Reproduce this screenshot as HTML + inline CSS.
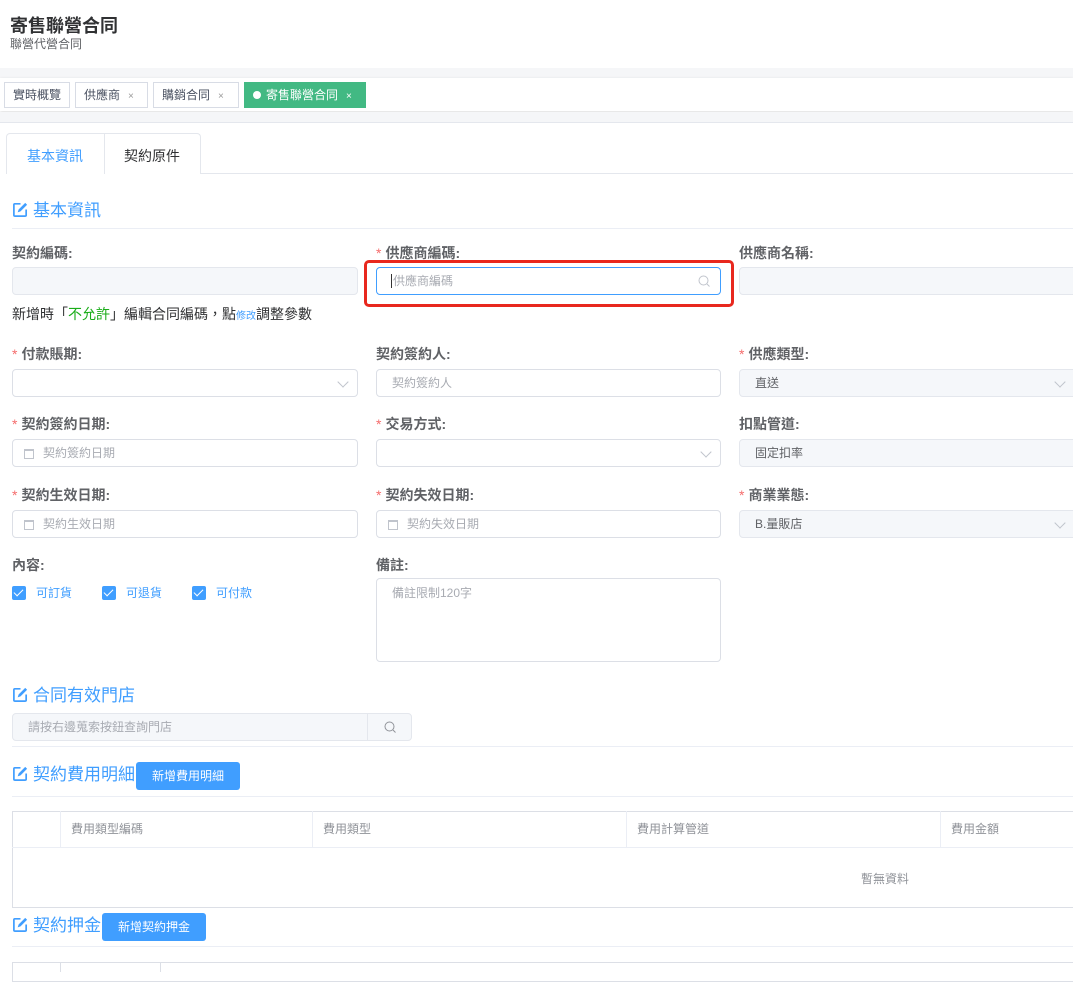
<!DOCTYPE html>
<html><head><meta charset="utf-8"><style>
*{box-sizing:border-box;margin:0;padding:0}
body{width:1073px;height:968px;overflow:hidden;background:#fff;font-family:"Liberation Sans","Noto Sans CJK TC",sans-serif;color:#606266;position:relative}
.a{position:absolute}
.lbl{position:absolute;font-size:14px;font-weight:bold;color:#606266;line-height:16px}
.lbl i{color:#f56c6c;font-style:normal;font-weight:normal;margin-right:4px}
.inp{position:absolute;height:28px;border:1px solid #dcdfe6;border-radius:4px;background:#fff;font-size:12px;color:#a8abb2;line-height:26px;padding-left:15px}
.dis{background:#f5f7fa;border-color:#e4e7ed;color:#606266}
.arrow{position:absolute;right:10px;top:8px;width:8px;height:8px;border-right:1px solid #c0c4cc;border-bottom:1px solid #c0c4cc;transform:rotate(45deg)}
.cal{position:absolute;left:11px;top:9px;width:10px;height:10px;border:1px solid #c0c4cc;border-top-width:2px}
.sec{position:absolute;left:12px;font-size:17px;color:#409eff;line-height:20px;white-space:nowrap}
.sec svg{vertical-align:-2px;margin-right:4px}
.hr{position:absolute;left:12px;right:0;height:1px;background:#ebeef5}
.btn{position:absolute;height:28px;background:#409eff;color:#fff;font-size:12px;border-radius:3px;text-align:center;line-height:28px}
.cb{position:absolute;top:586px;font-size:12px;color:#409eff;line-height:14px}
.cb b{display:inline-block;width:14px;height:14px;background:#409eff;border-radius:2px;vertical-align:-3px;margin-right:10px;position:relative}
.cb b:after{content:"";position:absolute;left:4px;top:1px;width:4px;height:8px;border-right:1px solid #fff;border-bottom:1px solid #fff;transform:rotate(45deg)}
.tag{position:absolute;top:82px;height:26px;border:1px solid #d8dce5;font-size:12px;color:#495060;line-height:24px;padding-left:8px;background:#fff}
.tag span{color:#999;font-size:10px;margin-left:8px}
.th{position:absolute;top:811px;height:37px;border-left:1px solid #ebeef5;font-size:12px;color:#909399;line-height:37px;padding-left:10px}
</style></head><body>
<div class="a" style="left:10px;top:12px;font-size:18px;font-weight:bold;color:#303133">寄售聯營合同</div>
<div class="a" style="left:10px;top:35px;font-size:12px;color:#606266">聯營代營合同</div>
<div class="a" style="left:0;top:68px;width:1073px;height:10px;background:#f5f6f8"></div>
<div class="a" style="left:0;top:78px;width:1073px;height:33px;background:#fff;box-shadow:0 1px 3px rgba(0,0,0,.15)"></div>
<div class="tag" style="left:4px;width:66px">實時概覽</div>
<div class="tag" style="left:75px;width:73px">供應商<span>×</span></div>
<div class="tag" style="left:153px;width:86px">購銷合同<span>×</span></div>
<div class="tag" style="left:244px;width:122px;background:#42b983;border-color:#42b983;color:#fff"><b style="display:inline-block;width:8px;height:8px;border-radius:50%;background:#fff;margin-right:5px;vertical-align:0"></b>寄售聯營合同<span style="color:#fff">×</span></div>
<div class="a" style="left:0;top:112px;width:1073px;height:10px;background:#f5f6f8"></div>
<div class="a" style="left:0;top:122px;width:1073px;height:1px;background:#e4e7ed"></div>
<div class="a" style="left:6px;top:173px;right:0;height:1px;background:#e4e7ed"></div>
<div class="a" style="left:6px;top:133px;width:195px;height:41px;border:1px solid #e4e7ed;border-bottom:none;border-radius:4px 4px 0 0;background:#fff"></div>
<div class="a" style="left:104px;top:133px;width:1px;height:41px;background:#e4e7ed"></div>
<div class="a" style="left:27px;top:146px;font-size:14px;color:#409eff">基本資訊</div>
<div class="a" style="left:124px;top:146px;font-size:14px;color:#303133">契約原件</div>

<svg width="0" height="0" style="position:absolute"><defs><symbol id="ed" viewBox="0 0 18 18"><path d="M9 3H3a1 1 0 0 0-1 1v11a1 1 0 0 0 1 1h11a1 1 0 0 0 1-1V9" fill="none" stroke="#409eff" stroke-width="1.8"/><path d="M14 2l2 2-7 7-3 1 1-3z" fill="#409eff"/></symbol></defs></svg>

<div class="sec" style="top:201px"><svg width="17" height="17"><use href="#ed"/></svg>基本資訊</div>
<div class="hr" style="top:228px"></div>

<div class="lbl" style="left:12px;top:245px">契約編碼:</div>
<div class="inp dis" style="left:12px;top:267px;width:346px"></div>
<div class="lbl" style="left:376px;top:245px"><i>*</i>供應商編碼:</div>
<div class="inp" style="left:376px;top:267px;width:345px;border-color:#409eff;color:#a8abb2"><span style="border-left:1px solid #333;padding-left:1px;margin-left:-1px">供應商編碼</span><svg class="a" style="right:10px;top:7px" width="12" height="12"><circle cx="5.5" cy="5.5" r="4.5" fill="none" stroke="#c0c4cc"/><path d="M9 9l2.5 2.5" stroke="#c0c4cc"/></svg></div>
<div class="a" style="left:364px;top:260px;width:370px;height:47px;border:3px solid #e8281e;border-radius:5px"></div>
<div class="lbl" style="left:739px;top:245px">供應商名稱:</div>
<div class="inp dis" style="left:739px;top:267px;width:340px"></div>
<div class="a" style="left:12px;top:304px;font-size:14px;color:#303133">新增時「<span style="color:#1aad19">不允許</span>」編輯合同編碼，點<span style="font-size:10px;color:#409eff">修改</span>調整參數</div>

<div class="lbl" style="left:12px;top:346px"><i>*</i>付款賬期:</div>
<div class="inp" style="left:12px;top:369px;width:346px"><div class="arrow"></div></div>
<div class="lbl" style="left:376px;top:346px">契約簽約人:</div>
<div class="inp" style="left:376px;top:369px;width:345px">契約簽約人</div>
<div class="lbl" style="left:739px;top:346px"><i>*</i>供應類型:</div>
<div class="inp dis" style="left:739px;top:369px;width:340px">直送<div class="arrow" style="right:14px"></div></div>

<div class="lbl" style="left:12px;top:416px"><i>*</i>契約簽約日期:</div>
<div class="inp" style="left:12px;top:439px;width:346px;padding-left:30px"><div class="cal"></div>契約簽約日期</div>
<div class="lbl" style="left:376px;top:416px"><i>*</i>交易方式:</div>
<div class="inp" style="left:376px;top:439px;width:345px"><div class="arrow"></div></div>
<div class="lbl" style="left:739px;top:416px">扣點管道:</div>
<div class="inp dis" style="left:739px;top:439px;width:340px">固定扣率</div>

<div class="lbl" style="left:12px;top:487px"><i>*</i>契約生效日期:</div>
<div class="inp" style="left:12px;top:510px;width:346px;padding-left:30px"><div class="cal"></div>契約生效日期</div>
<div class="lbl" style="left:376px;top:487px"><i>*</i>契約失效日期:</div>
<div class="inp" style="left:376px;top:510px;width:345px;padding-left:30px"><div class="cal"></div>契約失效日期</div>
<div class="lbl" style="left:739px;top:487px"><i>*</i>商業業態:</div>
<div class="inp dis" style="left:739px;top:510px;width:340px">B.量販店<div class="arrow" style="right:14px"></div></div>

<div class="lbl" style="left:12px;top:557px">內容:</div>
<div class="cb" style="left:12px"><b></b>可訂貨</div>
<div class="cb" style="left:102px"><b></b>可退貨</div>
<div class="cb" style="left:192px"><b></b>可付款</div>
<div class="lbl" style="left:376px;top:557px">備註:</div>
<div class="inp" style="left:376px;top:578px;width:345px;height:84px;line-height:28px;padding-top:0">備註限制120字</div>

<div class="sec" style="top:686px"><svg width="17" height="17"><use href="#ed"/></svg>合同有效門店</div>
<div class="inp dis" style="left:12px;top:713px;width:400px;color:#a8abb2">請按右邊蒐索按鈕查詢門店<div class="a" style="left:354px;top:0;width:1px;height:26px;background:#e4e7ed"></div><svg class="a" style="left:371px;top:7px" width="12" height="12"><circle cx="5.5" cy="5.5" r="4.5" fill="none" stroke="#909399"/><path d="M9 9l2.5 2.5" stroke="#909399"/></svg></div>
<div class="hr" style="top:746px"></div>

<div class="sec" style="top:765px"><svg width="17" height="17"><use href="#ed"/></svg>契約費用明細</div>
<div class="btn" style="left:136px;top:762px;width:104px">新增費用明細</div>
<div class="hr" style="top:796px"></div>
<div class="a" style="left:12px;top:811px;width:1070px;height:97px;border:1px solid #dcdfe6"></div>
<div class="a" style="left:12px;top:847px;width:1070px;height:1px;background:#ebeef5"></div>
<div class="th" style="left:60px;width:252px">費用類型編碼</div>
<div class="th" style="left:312px;width:314px">費用類型</div>
<div class="th" style="left:626px;width:314px">費用計算管道</div>
<div class="th" style="left:940px;width:140px">費用金額</div>
<div class="a" style="left:861px;top:870px;font-size:12px;color:#909399">暫無資料</div>

<div class="sec" style="top:916px"><svg width="17" height="17"><use href="#ed"/></svg>契約押金</div>
<div class="btn" style="left:102px;top:913px;width:104px">新增契約押金</div>
<div class="hr" style="top:946px"></div>
<div class="a" style="left:12px;top:962px;width:1070px;height:20px;border:1px solid #dcdfe6"></div>
<div class="a" style="left:60px;top:962px;width:1px;height:10px;background:#dcdfe6"></div>
<div class="a" style="left:160px;top:962px;width:1px;height:10px;background:#dcdfe6"></div>
</body></html>
